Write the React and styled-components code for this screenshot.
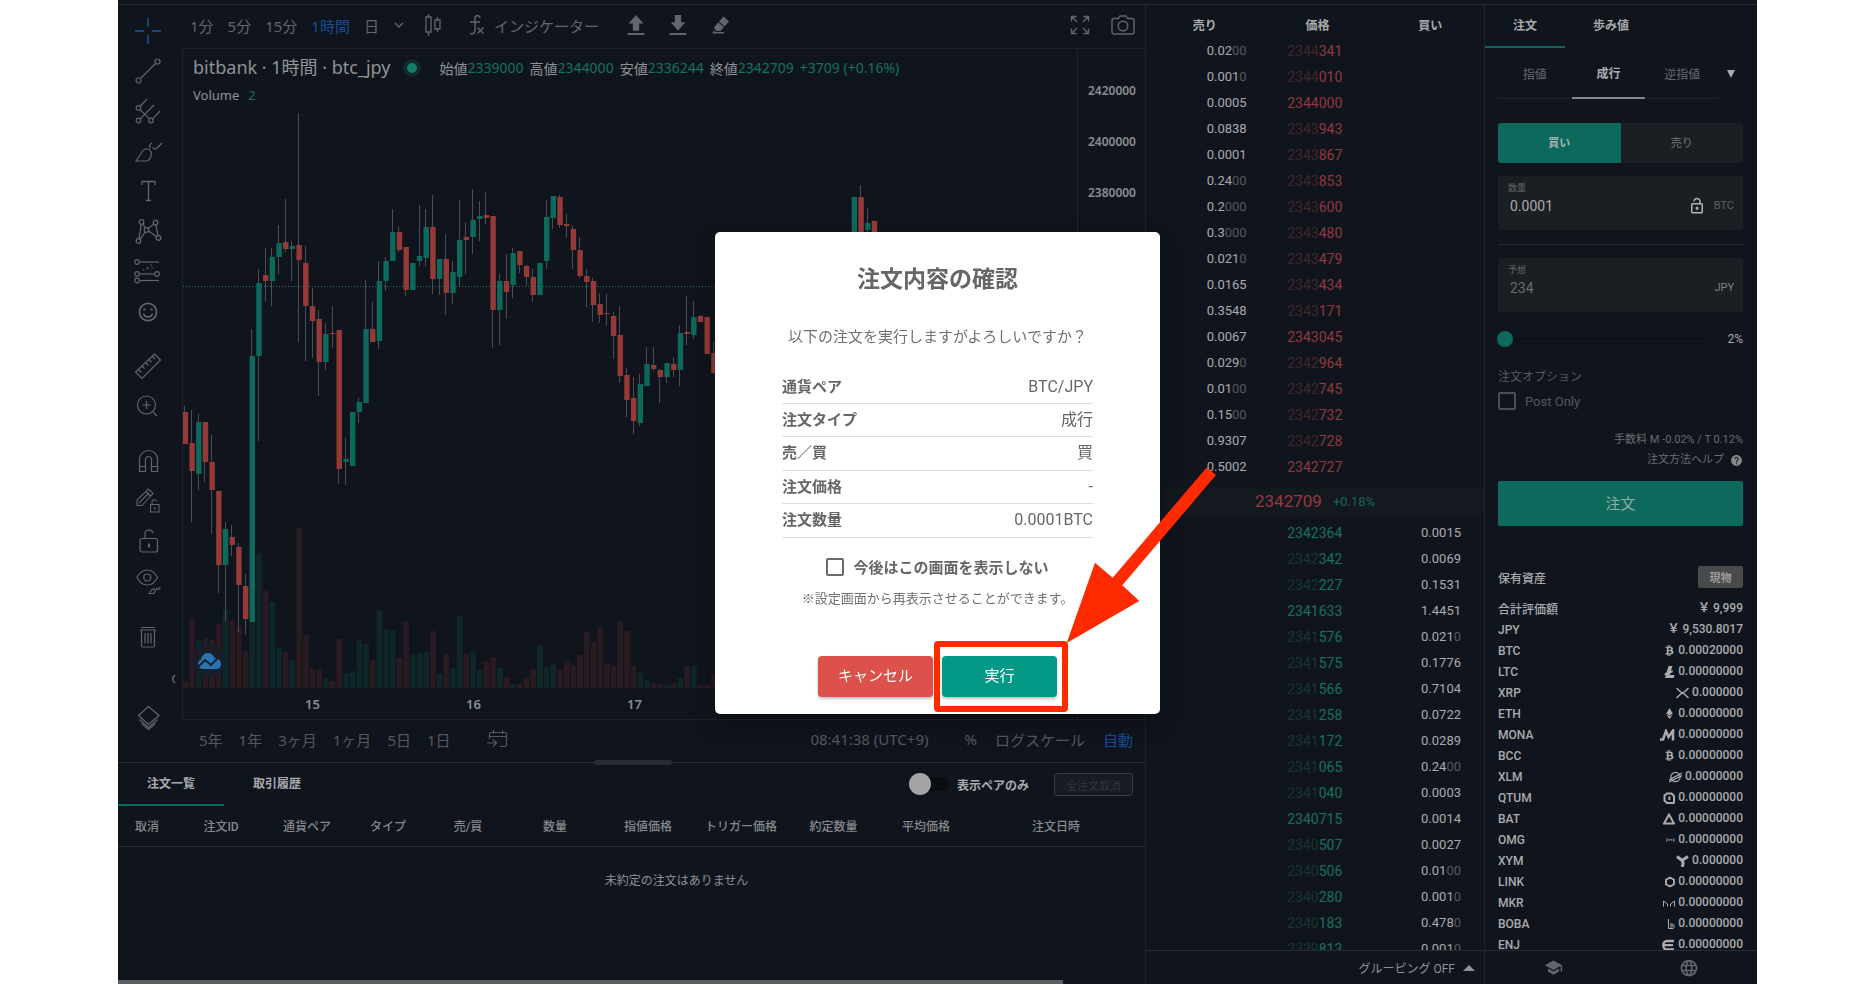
import React from "react";
import styled, { createGlobalStyle, css } from "styled-components";
import { MdSchool, MdLanguage, MdHelp, MdOutlineLockOpen } from "react-icons/md";
import { FaBtc, FaEthereum } from "react-icons/fa";

const c = {
  bg: "#10151d",
  line: "#1f242b",
  lineStrong: "#282c33",
  text: "#a9abae",
  soft: "#85888c",
  mute: "#55585d",
  icon: "#62656a",
  green: "#0d695b",
  greenText: "#147060",
  red: "#963a37",
  blue: "#164e92",
  field: "#1b1e22",
};

const Global = createGlobalStyle`
  *, *::before, *::after { box-sizing: border-box; }
  body { margin: 0; background: #fff; font-family: Roboto, "Noto Sans CJK JP", sans-serif; overflow: hidden; }
  button { border: 0; padding: 0; margin: 0; background: none; font: inherit; color: inherit; cursor: pointer; }
  input { font: inherit; margin: 0; }
  table { border-collapse: collapse; border-spacing: 0; }
  th { font-weight: inherit; }
  svg { display: block; flex: none; }
`;

const chartFont = css`font-family: "Noto Sans", "Noto Sans CJK JP", sans-serif;`;

const Page = styled.div`
  height: 100vh;
  padding: 0 118px;
`;
const Terminal = styled.div`
  height: 100%;
  display: flex;
  flex-direction: column;
  background: ${c.bg};
  color: ${c.text};
  font-size: 12px;
`;
const TopStrip = styled.header`
  height: 5px;
  flex: none;
  border-bottom: 1px solid ${c.lineStrong};
`;
const Columns = styled.main`
  flex: 1;
  min-height: 0;
  display: flex;
`;
const Main = styled.section`
  flex: 1;
  min-width: 0;
  display: flex;
  flex-direction: column;
`;

/* ---------- chart area ---------- */
const ChartArea = styled.div`
  height: 757px;
  flex: none;
  display: flex;
  ${chartFont}
`;
const Rail = styled.nav`
  width: 64px;
  flex: none;
  display: flex;
  flex-direction: column;
  padding: 6px 5px 24px 0;
  color: ${c.icon};
`;
const RailGroup = styled.div`
  display: flex;
  flex-direction: column;
  margin-bottom: 15px;
  &:last-child { margin: auto 0 0; }
`;
const RailButton = styled.button`
  height: 40px;
  display: flex;
  align-items: center;
  justify-content: center;
  color: ${(p) => (p.$active ? "#1a5ba8" : "inherit")};
`;
const CollapseRow = styled.div`
  display: flex;
  justify-content: flex-end;
  margin-top: 2px;
`;
const ChartColumn = styled.div`
  flex: 1;
  min-width: 0;
  display: flex;
  flex-direction: column;
`;
const Toolbar = styled.div`
  height: 43px;
  flex: none;
  display: flex;
  align-items: center;
  padding: 0 3px 3px 1px;
  font-size: 15px;
  color: ${c.icon};
`;
const ToolButton = styled.button`
  height: 32px;
  padding: 0 7px;
  display: flex;
  align-items: center;
  gap: 9px;
  white-space: nowrap;
  color: ${(p) => (p.$active ? c.blue : "inherit")};
`;
const Spacer = styled.div`flex: 1;`;
const ToolGroup = styled.div`
  display: flex;
  align-items: center;
  gap: ${(p) => p.$gap || 0}px;
  margin-left: ${(p) => p.$start || 0}px;
`;
const ChartFrame = styled.div`
  flex: 1;
  min-height: 0;
  display: flex;
  border: 1px solid ${c.line};
  border-right: 0;
`;
const Plot = styled.div`
  flex: 1;
  min-width: 0;
  display: flex;
  flex-direction: column;
  position: relative;
  overflow: hidden;
`;
const Legend = styled.div`
  position: absolute;
  left: 10px;
  top: 5px;
  white-space: nowrap;
`;
const LegendRow = styled.div`
  display: flex;
  align-items: center;
  height: 27px;
`;
const Symbol = styled.span`
  font-size: 18px;
  line-height: 27px;
  color: #8f9296;
`;
const Live = styled.i`
  width: 18px;
  height: 18px;
  margin: 0 19px 0 12px;
  border-radius: 50%;
  border: 4px solid #112a2d;
  background: #10806a;
`;
const Ohlc = styled.span`
  color: ${(p) => (p.$up ? c.greenText : "#8f9296")};
  font-size: ${(p) => (p.$small ? 13 : 14)}px;
  margin-right: ${(p) => p.$end || 0}px;
`;
const Badge = styled.div`
  position: absolute;
  left: 10px;
  top: 596px;
  width: 32px;
  height: 32px;
  border-radius: 50%;
  display: grid;
  place-items: center;
  background: #1a1e2a;
`;
const TimeAxis = styled.div`
  height: 31px;
  flex: none;
  display: flex;
  align-items: center;
  padding-left: 49px;
  font-size: 13px;
  font-weight: 600;
  color: #8b8e92;
  span { width: 161px; text-align: center; }
`;
const PriceAxis = styled.div`
  width: 68px;
  flex: none;
  display: flex;
  flex-direction: column;
  padding: 17px 9px 0 0;
  border-left: 1px solid ${c.line};
  font-size: 12px;
  font-weight: 600;
  text-align: right;
  color: #8b8e92;
  span { height: 51px; line-height: 50px; }
`;
const RangeBar = styled.div`
  height: 42px;
  flex: none;
  display: flex;
  align-items: center;
  padding: 0 5px 4px 10px;
  font-size: 15px;
  color: ${c.mute};
`;

/* ---------- orders ---------- */
const Divider = styled.div`
  height: 1px;
  flex: none;
  background: ${c.lineStrong};
  position: relative;
`;
const Handle = styled.i`
  position: absolute;
  left: 50%;
  top: -2px;
  width: 78px;
  height: 5px;
  margin-left: -38px;
  border-radius: 3px;
  background: #282b31;
`;
const Orders = styled.section`
  flex: 1;
  min-height: 0;
  display: flex;
  flex-direction: column;
`;
const OrdersBar = styled.div`
  height: 43px;
  flex: none;
  display: flex;
  align-items: center;
  padding-right: 12px;
`;
const Tab = styled.button`
  align-self: stretch;
  padding: 0 ${(p) => p.$pad}px 2px;
  font-size: 12px;
  font-weight: 700;
  border-bottom: 2px solid ${(p) => (p.$active ? c.green : "transparent")};
`;
const ToggleLabel = styled.label`
  display: flex;
  align-items: center;
  gap: 9px;
  margin-right: 25px;
  padding-bottom: 1px;
  font-weight: 700;
`;
const Toggle = styled.input`
  appearance: none;
  width: 39px;
  height: 22px;
  border-radius: 11px;
  background: linear-gradient(${c.bg} 4px, #0a0d12 4px, #0a0d12 18px, ${c.bg} 18px);
  &::before {
    content: "";
    display: block;
    width: 22px;
    height: 22px;
    border-radius: 50%;
    background: #a3a4a5;
  }
`;
const CancelAll = styled.button`
  width: 79px;
  height: 23px;
  border: 1px solid #363c41;
  border-radius: 3px;
  font-size: 11px;
  background: #161c22;
  color: #30363b;
`;
const OrdersScroll = styled.div`
  flex: 1;
  overflow: hidden;
`;
const OrdersTable = styled.table`
  width: 1117px;
  table-layout: fixed;
  text-align: center;
  thead tr { height: 40px; border-bottom: 1px solid ${c.lineStrong}; font-weight: 500; color: ${c.soft}; }
  th { padding: 0 0 1px; }
  td { height: 66px; padding: 0; color: #8f9296; }
`;
const ScrollThumb = styled.div`
  width: 92%;
  height: 4px;
  flex: none;
  background: #5c5d5e;
`;

/* ---------- order book ---------- */
const Book = styled.section`
  width: 339px;
  flex: none;
  display: flex;
  flex-direction: column;
  border-left: 1px solid ${c.line};
`;
const BookBody = styled.div`
  flex: 1;
  min-height: 0;
  overflow: hidden;
`;
const BookTable = styled.table`
  width: 100%;
  table-layout: fixed;
  thead th { height: 33px; padding: 6px 0 0 5px; font-size: 12px; font-weight: 700; }
`;
const BookCell = styled.td`
  height: 26px;
  line-height: 26px;
  padding: 0 ${(p) => p.$end}px 0 0;
  text-align: right;
  font-size: ${(p) => (p.$price ? 14 : 13)}px;
  color: ${(p) => (p.$price === "ask" ? "#91393d" : p.$price === "bid" ? "#19705f" : c.text)};
  span { color: ${(p) => (p.$price === "ask" ? "#43252b" : p.$price === "bid" ? "#16352f" : "#54585d")}; }
`;
const LastCell = styled.td`
  height: 40px;
  padding: 7px 0 5px;
`;
const LastPrice = styled.div`
  height: 28px;
  display: flex;
  align-items: center;
  gap: 11px;
  padding-left: 109px;
  font-size: 17px;
  color: #96393f;
  background: #141920;
  small { font-size: 13px; color: #166453; }
`;
const Footer = styled.footer`
  height: 34px;
  flex: none;
  display: flex;
  align-items: center;
  border-top: 1px solid ${c.lineStrong};
  color: ${(p) => (p.$dim ? c.icon : "#8f9296")};
`;
const Grouping = styled.button`
  margin-left: auto;
  padding-right: 9px;
  display: flex;
  align-items: center;
  gap: 8px;
  font-size: 12px;
`;
const FooterButton = styled.button`
  flex: 1;
  display: flex;
  justify-content: center;
`;

/* ---------- order form ---------- */
const Side = styled.aside`
  width: 273px;
  flex: none;
  display: flex;
  flex-direction: column;
  border-left: 1px solid ${c.line};
`;
const SideTabs = styled.div`
  height: 43px;
  flex: none;
  display: flex;
`;
const Form = styled.form`
  flex: none;
  display: flex;
  flex-direction: column;
  padding: 0 14px 0 13px;
`;
const TypeTabs = styled.div`
  height: 51px;
  display: flex;
`;
const TypeTab = styled.button`
  flex: 1;
  font-weight: ${(p) => (p.$active ? 700 : 400)};
  color: ${(p) => (p.$active ? c.text : "#65686c")};
  border-bottom: ${(p) => (p.$active ? `2px solid #85888b` : `1px solid ${c.line}`)};
`;
const MoreTypes = styled.button`
  width: 24px;
  display: flex;
  align-items: center;
  justify-content: center;
`;
const SidePair = styled.div`
  height: 40px;
  display: flex;
  margin: 24px 0 13px;
  border-radius: 3px;
  overflow: hidden;
`;
const SideButton = styled.button`
  flex: 1;
  padding-bottom: 2px;
  font-size: 11px;
  font-weight: ${(p) => (p.$active ? 700 : 500)};
  background: ${(p) => (p.$active ? c.green : c.field)};
  color: ${(p) => (p.$active ? "#a5b5b2" : "#62666a")};
`;
const Field = styled.label`
  height: 54px;
  display: flex;
  flex-direction: column;
  padding: 5px 9px 0 10px;
  background: ${c.field};
  font-size: 9px;
  line-height: 14px;
  color: #65686c;
`;
const FieldRow = styled.span`
  display: flex;
  align-items: center;
  gap: 8px;
  height: 22px;
  font-size: 11px;
  color: ${(p) => (p.$unit ? "#808386" : "#5c5f63")};
  svg { color: #b0b2b4; }
`;
const FieldInput = styled.input`
  flex: 1;
  min-width: 0;
  border: 0;
  outline: 0;
  padding: 0 2px;
  background: none;
  font-size: 14px;
  color: ${(p) => (p.$dim ? "#6a6d71" : c.text)};
`;
const Rule = styled.hr`
  width: 100%;
  height: 1px;
  border: 0;
  margin: 14px 0 13px;
  background: ${c.lineStrong};
`;
const SliderRow = styled.label`
  display: flex;
  align-items: center;
  justify-content: space-between;
  height: 16px;
  margin: 19px 0 0 -1px;
`;
const Slider = styled.input`
  appearance: none;
  width: 211px;
  height: 16px;
  background: linear-gradient(transparent 7px, #0c1117 7px, #0c1117 9px, transparent 9px);
  &::-webkit-slider-thumb {
    appearance: none;
    width: 16px;
    height: 16px;
    border-radius: 50%;
    background: ${c.green};
  }
`;
const OptionTitle = styled.div`
  margin-top: 21px;
  line-height: 18px;
  color: #55585c;
`;
const CheckLabel = styled.label`
  display: flex;
  align-items: center;
  justify-content: ${(p) => (p.$center ? "center" : "flex-start")};
  gap: 9px;
  height: 24px;
`;
const Check = styled.input`
  appearance: none;
  width: 18px;
  height: 18px;
  border: 2px solid ${(p) => (p.$dark ? "#4c4e51" : "#6a6a6a")};
  border-radius: 2px;
`;
const PostOnly = styled(CheckLabel)`
  margin-top: 3px;
  font-size: 13px;
  color: #55585c;
`;
const Fee = styled.div`
  margin-top: 18px;
  line-height: 18px;
  font-size: 11px;
  text-align: right;
  color: #696c70;
`;
const HelpLink = styled.a`
  margin-top: 2px;
  display: flex;
  align-items: center;
  justify-content: flex-end;
  gap: 6px;
  line-height: 18px;
  font-size: 11px;
  color: #696c70;
  text-decoration: none;
  svg { color: #85888b; }
`;
const Submit = styled.button`
  height: 45px;
  margin-top: 12px;
  padding-bottom: 2px;
  border-radius: 2px;
  font-size: 15px;
  background: ${c.green};
  color: #8fb0aa;
`;
const Assets = styled.section`
  flex: 1;
  min-height: 0;
  overflow: hidden;
  padding: 40px 14px 0 13px;
  font-weight: 500;
`;
const AssetsHead = styled.div`
  display: flex;
  align-items: center;
  justify-content: space-between;
  height: 22px;
  margin-bottom: 10px;
`;
const Spot = styled.button`
  width: 45px;
  height: 22px;
  border-radius: 2px;
  font-size: 11px;
  font-weight: 700;
  background: #48494a;
  color: #9c9d9e;
`;
const AssetTable = styled.table`
  width: 100%;
  th { height: 21px; padding: 0; text-align: left; }
  td { padding: 0; }
`;
const Amount = styled.div`
  display: flex;
  align-items: center;
  justify-content: flex-end;
  gap: 3px;
  line-height: 21px;
  span { font-weight: 700; }
`;

/* ---------- dialog ---------- */
const Overlay = styled.div`
  position: fixed;
  inset: 0;
  display: flex;
  align-items: center;
  justify-content: center;
  padding-bottom: 39px;
`;
const Dialog = styled.div`
  position: relative;
  width: 445px;
  display: flex;
  flex-direction: column;
  align-items: center;
  padding: 31px 67px 17px;
  border-radius: 5px;
  background: #fff;
  color: #666;
  font-size: 15px;
  box-shadow: 0 10px 22px rgba(0, 0, 0, 0.35);
`;
const DialogTitle = styled.h2`
  margin: 0 0 28px;
  font-size: 23px;
  line-height: 34px;
  font-weight: 700;
`;
const Message = styled.p`
  margin: 0 0 22px;
  line-height: 24px;
  white-space: nowrap;
  color: #707070;
`;
const Summary = styled.table`
  width: 100%;
  height: 167px;
  margin-bottom: 17px;
  tr { border-bottom: 1px solid #dedede; }
  th, td { padding: 0; line-height: 24px; }
  th { text-align: left; font-weight: 700; }
  td { text-align: right; font-size: 16px; }
`;
const DialogCheck = styled(CheckLabel)`
  font-weight: 700;
`;
const Note = styled.p`
  margin: 10px 0 47px;
  font-size: 13px;
  line-height: 20px;
  white-space: nowrap;
  color: #707070;
`;
const Actions = styled.div`
  display: flex;
  gap: 9px;
`;
const ActionButton = styled.button`
  width: 115px;
  height: 41px;
  padding-bottom: 3px;
  border-radius: 4px;
  color: #fff;
  background: ${(p) => (p.$danger ? "#dc5149" : "#049886")};
  box-shadow: 0 2px 3px rgba(0, 0, 0, 0.25);
`;
const Callout = styled.svg`
  position: absolute;
  left: 219px;
  top: 235px;
  pointer-events: none;
`;

/* ---------- icons ---------- */
const Line = ({ size = 28, w = 1, children, ...p }) => (
  <svg width={size} height={size} viewBox="0 0 28 28" fill="none" stroke="currentColor" strokeWidth={w} aria-hidden="true" {...p}>
    {children}
  </svg>
);

const railIcons = [
  [
    ["十字", <Line w={1.3}><path d="M14 1v9M14 18v9M1 14h9M18 14h9" /></Line>],
    ["トレンドライン", <Line w={1.2}><circle cx="4.5" cy="23.5" r="2.5" /><circle cx="23.5" cy="4.5" r="2.5" /><path d="M6.5 21.5 21.5 6.5" /></Line>],
    ["ピッチフォーク", <Line w={1.2}><circle cx="4.5" cy="11" r="2.3" /><circle cx="4.5" cy="23.5" r="2.3" /><circle cx="17" cy="23.5" r="2.3" /><path d="M6 9.500 13 2M6.200 21.800 20 8M18.600 21.800 26 14M6.200 12.600 15.400 21.800" /></Line>],
    ["ブラシ", <Line w={1.2}><path d="M2 24 9 13.500c2-2.500 7-2 8 1.500s-1 9-5 9zM28 6l-5 5c-2 2-4 1-4-1M17 11c-3-1-1-4 1-5" /></Line>],
    ["テキスト", <Line w={1.3}><path d="M8 8V4.500h13V8M14.500 4.500v19M12 23.500h5" /></Line>],
    ["パターン", <Line w={1.3}><circle cx="7.500" cy="5" r="2.300" /><circle cx="21.500" cy="5.500" r="2.300" /><circle cx="12.500" cy="13" r="2.300" /><circle cx="4.500" cy="24" r="2.300" /><circle cx="24.500" cy="21" r="2.300" /><path d="M7.200 7.300 5 21.700M8.800 7l2.500 4M14 11.200l6-4M21.900 7.800l2.200 11M6 22.300l5.300-7.400M14.600 14l8 5.800" /></Line>],
    ["予測", <Line w={1.2}><circle cx="3" cy="5" r="2.300" /><path d="M5.500 5H25" /><circle cx="3" cy="17" r="2.300" /><circle cx="23" cy="17" r="2.300" /><path d="M5.500 17h15" /><circle cx="3" cy="23.500" r="2.300" /><path d="M5.500 23.500H25" /><path d="M9 13.500l9-6" strokeDasharray="1.500 3" /><path d="M13 12l9-2" strokeDasharray="1.500 3" /></Line>],
    ["アイコン", <Line w={1.7}><circle cx="14" cy="15" r="8.600" /><path d="M9.500 16.500c1 4.500 8 4.500 9 0" /><path d="M10.500 11.500v2M17.500 11.500v2" strokeWidth="2" /></Line>],
  ],
  [
    ["計測", <Line w={1.2}><path d="M1.500 20 20.500 2l6 6L8 26.500zM4.500 17.500l3 3M8 14l2.500 2.500M11.500 10.500l3 3M15 7.500l2.500 2.500M18.500 4.500l2.500 2.500" /></Line>],
    ["ズーム", <Line w={1.2}><circle cx="12.500" cy="13" r="9" /><path d="M12.500 9v8M8.500 13h8M19 20l4 4" /></Line>],
  ],
  [
    ["マグネット", <Line w={1.2}><path d="M5.500 24.500v-12a9 9 0 0 1 18 0v12h-6v-12a3 3 0 0 0-6 0v12zM5.500 19.500h6M17.500 19.500h6" /></Line>],
    ["描画ロック", <Line w={1.1}><path d="M3 18.500V13L14.500 2l4.500 4.500L8 18.500zM12 4.500l4.500 4.500M5 16 15 6" /><rect x="16.500" y="17.500" width="8.500" height="7.500" /><path d="M18 17.500V15c0-3 4-3 4.500-.5M20.800 20v2.500" /></Line>],
    ["ロック", <Line w={1.2}><rect x="6" y="11.500" width="17.500" height="13.500" rx="2" /><path d="M11 11.500V7c0-5 7.500-5 8-.5" /><path d="M15 16.500v4" strokeWidth="2" /></Line>],
    ["表示", <Line w={1.2}><path d="M3 10.500c5-10 15.500-10 20.500 0-5 10-15.500 10-20.500 0z" /><circle cx="13.300" cy="10.500" r="3.500" /><path d="M15 26.500l3-4c1.500-1.500 4 0 3 2.500l-1.500 1.500zM26.500 20l-2.500 2.500c-1 .500-2 0-1.500-2" /></Line>],
  ],
  [["削除", <Line w={1.2}><path d="M7 5.500h14M6 8h16M7.500 8v15.500c0 1 .5 1.500 1.500 1.500h10c1 0 1.500-.5 1.500-1.500V8M11 11v10.500M14 11v10.500M17 11v10.500" /></Line>]],
  [["レイヤー", <Line w={1.2}><path d="M14.500 2.500 25 11.500 14.500 20.500 4.500 11.500zM5.500 15.500l9 8 9-8M7.500 19.500l7 6 7-6" /></Line>]],
];

/* [high, body top, body bottom, low, rising, volume height] per hour */
const candles = [
  [406,412,444,444,0,7],[410,443,471,522,0,69],[414,422,474,490,1,48],[422,422,462,482,0,50],[435,462,490,534,0,48],
  [491,491,565,593,0,64],[522,529,565,621,1,78],[525,537,545,556,0,68],[543,547,585,632,0,62],[574,586,619,635,0,37],
  [329,356,622,622,1,75],[269,283,356,441,1,134],[248,275,281,302,0,97],[248,257,281,306,1,86],[225,243,257,274,1,40],
  [199,242,249,252,0,36],[241,246,249,281,1,28],[113,245,260,342,0,160],[246,263,306,361,0,53],[288,306,321,358,0,19],
  [310,319,362,396,0,18],[323,334,362,370,1,10],[306,333,334,348,0,7],[330,330,469,484,0,49],[438,459,462,485,1,15],
  [412,412,466,466,1,17],[398,402,412,423,1,48],[280,329,403,403,1,44],[302,329,342,342,0,28],[261,281,341,349,1,78],
  [257,261,281,291,1,59],[209,232,261,261,1,58],[226,232,250,252,0,30],[247,247,290,296,0,67],[263,263,290,290,1,34],
  [205,256,261,266,1,35],[209,227,258,266,1,36],[195,227,279,294,0,57],[259,259,279,295,1,14],[234,259,293,315,0,34],
  [261,272,293,304,1,20],[200,240,277,287,1,72],[222,237,240,274,0,34],[189,220,237,254,1,36],[201,216,219,241,1,18],
  [192,215,218,224,0,27],[216,216,310,348,0,31],[274,281,310,345,1,20],[254,281,292,319,0,11],[248,253,285,298,1,4],
  [251,251,265,273,0,4],[265,266,277,286,0,11],[269,277,295,302,0,19],[263,263,295,295,1,43],[200,217,261,269,1,21],
  [196,196,218,229,1,24],[195,197,225,228,0,18],[214,224,226,238,0,27],[226,229,250,269,0,22],[237,250,276,278,0,33],
  [269,276,282,307,0,56],[278,281,305,322,0,46],[293,304,315,323,0,60],[294,313,314,326,0,24],[312,316,336,359,0,22],
  [306,335,376,383,0,66],[368,375,400,417,0,57],[377,398,421,434,0,22],[374,384,423,426,1,15],[347,364,386,386,1,8],
  [347,365,369,371,0,5],[369,370,377,403,0,4],[363,363,377,383,1,3],[357,364,370,377,0,5],[325,333,370,386,1,10],
  [296,332,334,345,0,22],[301,317,335,339,1,22],[315,316,322,322,0,3],[317,317,354,354,0,3],[342,353,373,374,0,14],
];
const lateCandles = [[197,197,290,290,1,0],[185,197,290,290,0,0],[208,223,230,232,1,0],[220,221,260,260,0,0]];

const Candle = ({ d, i }) => {
  const x = 185.4 + i * 6.69;
  return (
    <g>
      {d[5] > 0 && <rect x={x - 2.800} y={688 - d[5]} width="5.600" height={d[5]} fill={d[4] ? "#0f2729" : "#2a1a22"} />}
      <path d={`M${Math.round(x) - 0.5} ${d[0]}V${d[3]}`} stroke="#4a4d51" strokeWidth="1" />
      <rect x={x - 2.700} y={d[1]} width="5.400" height={d[2] - d[1]} fill={d[4] ? c.green : c.red} />
    </g>
  );
};

const Chart = () => (
  <svg width="894" height="639" viewBox="183 49 894 639" role="img" aria-label="btc_jpy チャート">
    {candles.map((d, i) => <Candle key={i} d={d} i={i} />)}
    {lateCandles.map((d, i) => <Candle key={i} d={d} i={i + 100} />)}
    <path d="M183 286.500H1077" stroke="#27776b" strokeDasharray="1 2" />
  </svg>
);

/* ---------- data ---------- */
const asks = [
  ["0.02|00", "2344|341"], ["0.001|0", "2344|010"], ["0.0005", "|2344000"], ["0.0838", "2343|943"], ["0.0001", "2343|867"],
  ["0.24|00", "2343|853"], ["0.2|000", "2343|600"], ["0.3|000", "2343|480"], ["0.021|0", "2343|479"], ["0.0165", "2343|434"],
  ["0.3548", "2343|171"], ["0.0067", "|2343045"], ["0.029|0", "2342|964"], ["0.01|00", "2342|745"], ["0.15|00", "2342|732"],
  ["0.9307", "2342|728"], ["0.5002", "|2342727"],
];
const bids = [
  ["0.0015", "|2342364"], ["0.0069", "2342|342"], ["0.1531", "2342|227"], ["1.4451", "|2341633"], ["0.021|0", "2341|576"],
  ["0.1776", "2341|575"], ["0.7104", "2341|566"], ["0.0722", "2341|258"], ["0.0289", "2341|172"], ["0.24|00", "2341|065"],
  ["0.0003", "2341|040"], ["0.0014", "|2340715"], ["0.0027", "2340|507"], ["0.01|00", "2340|506"], ["0.001|0", "2340|280"],
  ["0.478|0", "2340|183"], ["0.001|0", "2339|813"],
];
const Size = ({ v, end }) => {
  const [a, b] = v.split("|");
  return <BookCell $end={end}>{a}{b && <span>{b}</span>}</BookCell>;
};
const Price = ({ v, kind }) => {
  const [a, b] = v.split("|");
  return <BookCell $end={29} $price={kind}>{a && <span>{a}</span>}{b}</BookCell>;
};

const coin = (children, w = 12) => (
  <svg width={w} height="12" viewBox={`0 0 ${w} 12`} fill="none" stroke="currentColor" strokeWidth="1.500" aria-hidden="true">{children}</svg>
);
const assets = [
  ["BTC", <FaBtc size={11} />, "0.00020000"],
  ["LTC", coin(<path d="M4.500 0h4L7 5l2-.8-.5 2.300-2.200.8-.5 1.700H10.500L9.700 12H1l.9-3.200-1.600.6.6-2.300 1.600-.6z" fill="currentColor" stroke="none" />, 11), "0.00000000"],
  ["XRP", coin(<path d="M.5 1l3.700 3.600c1.300 1.200 3.300 1.200 4.600 0L12.500 1M.5 11l3.700-3.600c1.300-1.200 3.300-1.200 4.600 0L12.500 11" strokeWidth="1.400" />, 13), "0.000000"],
  ["ETH", <FaEthereum size={11} />, "0.00000000"],
  ["MONA", coin(<path d="M0 10.500h3L6 2l2.500 6L13 1.500V11.500" strokeWidth="2.500" />, 15), "0.00000000"],
  ["BCC", <FaBtc size={11} />, "0.00000000"],
  ["XLM", coin(<g strokeWidth="1.200"><circle cx="6.500" cy="6" r="4.600" /><path d="M0 9 13 2M0 11 13 4.500" /></g>, 13), "0.0000000"],
  ["QTUM", coin(<g><path d="M11.500 11H4L1.500 8.500v-5L4 1.500h4.500L11 4v7" strokeWidth="2" /><path d="M6.300 4.500v3.500" strokeWidth="2" /></g>), "0.00000000"],
  ["BAT", coin(<path d="M6 1.500 11 10.500H1z" strokeWidth="2" />), "0.00000000"],
  ["OMG", coin(<path d="M0 5h2v2H0zM3.500 7V5l1 1 1-1v2M9 5H7v2h2V6" strokeWidth=".6" />, 9), "0.00000000"],
  ["XYM", coin(<path d="M1 1.500 6 5.500 12 1.500M6 5.500c1.500 2 1.500 4 0 6.500" strokeWidth="3" />, 13), "0.000000"],
  ["LINK", coin(<path d="M5 1.500 9 3.700v4.600L5 10.500 1 8.300V3.700z" strokeWidth="1.900" />, 10), "0.00000000"],
  ["MKR", coin(<path d="M.5 9.500V4L4.500 7v2.500M11.500 9.500V4L7.500 7v2.500" strokeWidth="1" />), "0.00000000"],
  ["BOBA", coin(<g strokeWidth="1"><path d="M1.500 1v9.500H6c1.500 0 2-4.500-1-4.500H3" /><circle cx="4.500" cy="8.300" r="1" /></g>, 8), "0.00000000"],
  ["ENJ", coin(<path d="M12 2H5c-5 0-5 8.500 0 8.500h7M2 6.200h9" strokeWidth="2.300" />, 13), "0.00000000"],
];
const orderColumns = [
  ["取消", 58], ["注文ID", 90], ["通貨ペア", 82], ["タイプ", 80], ["売/買", 80], ["数量", 94],
  ["指値価格", 92], ["トリガー価格", 94], ["約定数量", 91], ["平均価格", 94], ["注文日時", 166],
];
const summary = [["通貨ペア", "BTC/JPY"], ["注文タイプ", "成行"], ["売／買", "買"], ["注文価格", "-"], ["注文数量", "0.0001BTC"]];
const ohlc = [["始値", "2339000"], ["高値", "2344000"], ["安値", "2336244"], ["終値", "2342709"]];

const ChartPanel = () => (
  <ChartArea>
    <Rail aria-label="描画ツール">
      {railIcons.map((group, g) => (
        <React.Fragment key={g}>
          {g === 4 && (
            <CollapseRow>
              <svg width="7" height="12" viewBox="0 0 7 12" fill="none" stroke="#707378" strokeWidth="1.300"><path d="M5 2c-3 2.500-3 5.500 0 8" /></svg>
            </CollapseRow>
          )}
          <RailGroup>
            {group.map(([label, icon], i) => (
              <RailButton key={label} aria-label={label} $active={g === 0 && i === 0}>{icon}</RailButton>
            ))}
          </RailGroup>
        </React.Fragment>
      ))}
    </Rail>
    <ChartColumn>
      <Toolbar>
        {["1分", "5分", "15分", "1時間", "日"].map((t) => <ToolButton key={t} $active={t === "1時間"}>{t}</ToolButton>)}
        <ToolButton aria-label="時間足"><svg width="12" height="8" viewBox="0 0 12 8" fill="none" stroke="currentColor" strokeWidth="1.500"><path d="M2 2l4 4 4-4" /></svg></ToolButton>
        <ToolGroup $start={5}>
          <ToolButton aria-label="チャートタイプ">
            <svg width="18" height="24" viewBox="0 0 18 24" fill="none" stroke="currentColor" strokeWidth="1.300"><path d="M4.500 1v3M4.500 19v4M2 4h5v15H2zM13.500 4v3M13.500 16v3M11 7h5v9h-5z" /></svg>
          </ToolButton>
        </ToolGroup>
        <ToolGroup $start={11}>
          <ToolButton>
            <svg width="18" height="22" viewBox="0 0 18 22" fill="none" stroke="currentColor" strokeWidth="1.400"><path d="M13 4c0-3-5-4-5 1v11c0 4-4 5-5 3M3 8h10M10.500 13.500l6 6M16.500 13.500l-6 6" /></svg>
            インジケーター
          </ToolButton>
        </ToolGroup>
        <ToolGroup $start={14} $gap={10}>
          <ToolButton aria-label="アップロード"><svg width="18" height="20" viewBox="5 2 14 19" fill="currentColor"><path d="M4 21h16v-2H4zM5 10h4v7h6v-7h4l-7-8z" /></svg></ToolButton>
          <ToolButton aria-label="ダウンロード"><svg width="18" height="20" viewBox="5 2 14 19" fill="currentColor"><path d="M4 21h16v-2H4zM5 9h4V2h6v7h4l-7 8z" /></svg></ToolButton>
          <ToolButton aria-label="消去"><svg width="20" height="20" viewBox="0 0 20 20" fill="currentColor"><path d="M12.500 1.500l5.500 5-4.500 5-5.500-5zM7.300 7.300l5.500 5-3.300 3.700H5l-2-3.500zM4 17h9v1.500H4zM1 18.500l2-3 2.500 3z" /></svg></ToolButton>
        </ToolGroup>
        <Spacer />
        <ToolGroup $gap={7}>
          <ToolButton aria-label="全画面"><svg width="20" height="20" viewBox="0 0 20 20" fill="none" stroke="currentColor" strokeWidth="1.400"><path d="M1.500 6.500v-5h5M2 2l5 5M13.500 1.500h5v5M18 2l-5 5M1.500 13.500v5h5M2 18l5-5M18.500 13.500v5h-5M18 18l-5-5" /></svg></ToolButton>
          <ToolButton aria-label="スクリーンショット"><svg width="24" height="20" viewBox="0 0 24 20" fill="none" stroke="currentColor" strokeWidth="1.400"><path d="M3 3.500h4.500l1.500-2.500h6l1.500 2.500H21c1.300 0 2 .7 2 2V17c0 1.300-.7 2-2 2H3c-1.300 0-2-.7-2-2V5.500c0-1.300.7-2 2-2z" /><circle cx="12" cy="11" r="4.800" /></svg></ToolButton>
        </ToolGroup>
      </Toolbar>
      <ChartFrame>
        <Plot>
          <Chart />
          <Legend>
            <LegendRow>
              <Symbol>bitbank · 1時間 · btc_jpy</Symbol>
              <Live />
              {ohlc.map(([k, v]) => (
                <React.Fragment key={k}><Ohlc>{k}</Ohlc><Ohlc $up $end={6}>{v}</Ohlc></React.Fragment>
              ))}
              <Ohlc $up>+3709 (+0.16%)</Ohlc>
            </LegendRow>
            <LegendRow><Ohlc $small $end={9}>Volume</Ohlc><Ohlc $up $small>2</Ohlc></LegendRow>
          </Legend>
          <Badge>
            <svg width="26" height="18" viewBox="0 0 26 18"><path d="M6 17a5 5 0 0 1-1-9.500C6 3 9 1 12 1c3.500 0 5.500 2 6.500 5 4 0 6.500 2.500 6.500 6 0 3-2 5-5 5z" fill="#2775b2" /><path d="M0 17 9 8l6 5 7-7" fill="none" stroke="#1a1e2a" strokeWidth="2" /></svg>
          </Badge>
          <TimeAxis><span>15</span><span>16</span><span>17</span></TimeAxis>
        </Plot>
        <PriceAxis><span>2420000</span><span>2400000</span><span>2380000</span></PriceAxis>
      </ChartFrame>
      <RangeBar>
        <ToolGroup $gap={2}>
          {["5年", "1年", "3ヶ月", "1ヶ月", "5日", "1日"].map((t) => <ToolButton key={t}>{t}</ToolButton>)}
        </ToolGroup>
        <ToolGroup $start={22}>
          <ToolButton aria-label="日付へ移動">
            <svg width="21" height="18" viewBox="0 0 21 18" fill="none" stroke="currentColor" strokeWidth="1.200"><path d="M2.500 9V4c0-1 .5-1.500 1.500-1.500h14c1 0 1.500.5 1.500 1.500v11c0 1-.5 1.500-1.500 1.500h-5M2.500 6.500h17M6.500 0v4M15.500 0v4M0 13h9M6 9.500 9.500 13 6 16.500" /></svg>
          </ToolButton>
        </ToolGroup>
        <Spacer />
        <ToolButton>08:41:38 (UTC+9)</ToolButton>
        <ToolGroup $start={22} $gap={4}>
          <ToolButton>%</ToolButton>
          <ToolButton>ログスケール</ToolButton>
          <ToolButton $active>自動</ToolButton>
        </ToolGroup>
      </RangeBar>
    </ChartColumn>
  </ChartArea>
);

const OrdersPanel = () => (
  <Orders>
    <OrdersBar>
      <Tab $pad={29} $active>注文一覧</Tab>
      <Tab $pad={29}>取引履歴</Tab>
      <Spacer />
      <ToggleLabel><Toggle type="checkbox" role="switch" />表示ペアのみ</ToggleLabel>
      <CancelAll>全注文取消</CancelAll>
    </OrdersBar>
    <OrdersScroll>
      <OrdersTable>
        <colgroup>{orderColumns.map(([k, w]) => <col key={k} width={w} />)}<col /></colgroup>
        <thead><tr>{orderColumns.map(([k]) => <th key={k}>{k}</th>)}<th /></tr></thead>
        <tbody><tr><td colSpan={12}>未約定の注文はありません</td></tr></tbody>
      </OrdersTable>
    </OrdersScroll>
    <ScrollThumb />
  </Orders>
);

const BookPanel = () => (
  <Book>
    <BookBody>
      <BookTable>
        <thead><tr><th>売り</th><th>価格</th><th>買い</th></tr></thead>
        <tbody>{asks.map(([s, p]) => <tr key={p}><Size v={s} end={12} /><Price v={p} kind="ask" /><td /></tr>)}</tbody>
        <tbody><tr><LastCell colSpan={3}><LastPrice>2342709<small>+0.18%</small></LastPrice></LastCell></tr></tbody>
        <tbody>{bids.map(([s, p]) => <tr key={p}><td /><Price v={p} kind="bid" /><Size v={s} end={23} /></tr>)}</tbody>
      </BookTable>
    </BookBody>
    <Footer>
      <Grouping>グルーピング OFF<svg width="12" height="6" viewBox="0 0 12 6" fill="currentColor"><path d="M6 0l6 6H0z" /></svg></Grouping>
    </Footer>
  </Book>
);

const SidePanel = () => (
  <Side>
    <SideTabs><Tab $pad={28} $active>注文</Tab><Tab $pad={28}>歩み値</Tab></SideTabs>
    <Form onSubmit={(e) => e.preventDefault()}>
      <TypeTabs>
        <TypeTab type="button">指値</TypeTab><TypeTab type="button" $active>成行</TypeTab><TypeTab type="button">逆指値</TypeTab>
        <MoreTypes type="button" aria-label="その他"><svg width="8" height="8" viewBox="0 0 8 8" fill="currentColor"><path d="M0 0h8L4 8z" /></svg></MoreTypes>
      </TypeTabs>
      <SidePair><SideButton type="button" $active>買い</SideButton><SideButton type="button">売り</SideButton></SidePair>
      <Field>数量<FieldRow><FieldInput defaultValue="0.0001" /><MdOutlineLockOpen size={18} />BTC</FieldRow></Field>
      <Rule />
      <Field>予想<FieldRow $unit><FieldInput $dim defaultValue="234" />JPY</FieldRow></Field>
      <SliderRow><Slider type="range" min="2" max="100" defaultValue="2" />2%</SliderRow>
      <OptionTitle>注文オプション</OptionTitle>
      <PostOnly><Check $dark type="checkbox" />Post Only</PostOnly>
      <Fee>手数料 M -0.02% / T 0.12%</Fee>
      <HelpLink href="#help">注文方法ヘルプ<MdHelp size={13} /></HelpLink>
      <Submit>注文</Submit>
    </Form>
    <Assets>
      <AssetsHead>保有資産<Spot>現物</Spot></AssetsHead>
      <AssetTable>
        <tbody>
          <tr><th scope="row">合計評価額</th><td><Amount><span>￥</span>9,999</Amount></td></tr>
          <tr><th scope="row">JPY</th><td><Amount><span>￥</span>9,530.8017</Amount></td></tr>
          {assets.map(([k, icon, v]) => <tr key={k}><th scope="row">{k}</th><td><Amount>{icon}{v}</Amount></td></tr>)}
        </tbody>
      </AssetTable>
    </Assets>
    <Footer $dim>
      <FooterButton aria-label="ヘルプ"><MdSchool size={19} /></FooterButton>
      <FooterButton aria-label="言語"><MdLanguage size={20} /></FooterButton>
    </Footer>
  </Side>
);

const ConfirmDialog = () => (
  <Overlay>
    <Dialog role="dialog" aria-modal="true" aria-labelledby="confirm-title">
      <DialogTitle id="confirm-title">注文内容の確認</DialogTitle>
      <Message>以下の注文を実行しますがよろしいですか？</Message>
      <Summary><tbody>{summary.map(([k, v]) => <tr key={k}><th scope="row">{k}</th><td>{v}</td></tr>)}</tbody></Summary>
      <DialogCheck $center><Check type="checkbox" />今後はこの画面を表示しない</DialogCheck>
      <Note>※設定画面から再表示させることができます。</Note>
      <Actions><ActionButton $danger>キャンセル</ActionButton><ActionButton>実行</ActionButton></Actions>
      <Callout width="283" height="246" viewBox="934 466 283 246" aria-hidden="true">
        <rect x="937" y="643" width="128" height="65" rx="1" fill="none" stroke="#ff2a00" strokeWidth="6" />
        <path d="M1066.700 642 1095 561.700l17.700 15L1206.700 466.500l9.300 7.500-93.700 110.300 17 15.700z" fill="#ff2a00" />
      </Callout>
    </Dialog>
  </Overlay>
);

export default function App() {
  return (
    <Page>
      <Global />
      <Terminal>
        <TopStrip />
        <Columns>
          <Main>
            <ChartPanel />
            <Divider><Handle /></Divider>
            <OrdersPanel />
          </Main>
          <BookPanel />
          <SidePanel />
        </Columns>
      </Terminal>
      <ConfirmDialog />
    </Page>
  );
}
